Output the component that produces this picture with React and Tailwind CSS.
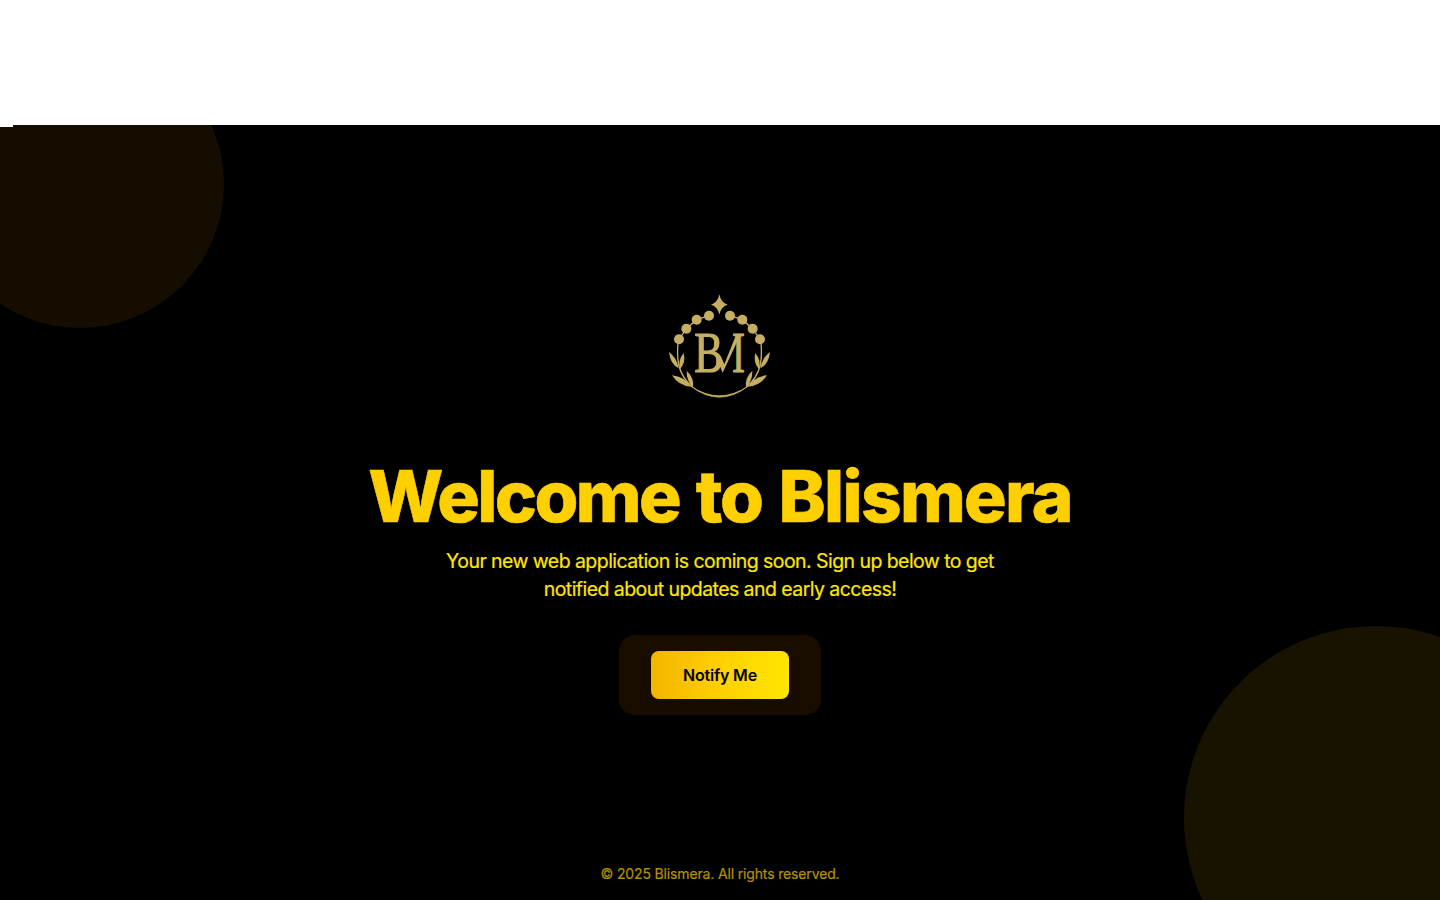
const gold = "#c6ae62";

function Sprig() {
  return (
    <g>
      <path d="M55 163 Q50 208 56 240 Q66 280 98 306" fill="none" stroke={gold} strokeWidth="4" />
      <path d="M57 163 L79 131 L110 104 L147 92" fill="none" stroke={gold} strokeWidth="4" />
      <circle cx="57" cy="163" r="15" />
      <circle cx="79" cy="131" r="15" />
      <circle cx="110" cy="104" r="15" />
      <circle cx="147" cy="92" r="15" />
      <path d="M27 201 Q51 219 56 250 Q31 238 27 201Z" />
      <path d="M71 204 Q78 233 60 252 Q53 226 71 204Z" />
      <path d="M36 271 Q74 275 93 305 Q56 303 36 271Z" />
      <path d="M80 257 Q103 279 99 307 Q79 287 80 257Z" />
    </g>
  );
}

function Logo() {
  return (
    <svg viewBox="0 0 360 360" className="size-[120px]" fill={gold} role="img" aria-label="Blismera">
      <path d="M178 28 Q183 54 203 59 Q183 64 178 89 Q173 64 153 59 Q173 54 178 28Z" />
      <Sprig />
      <g transform="translate(357 0) scale(-1 1)">
        <Sprig />
      </g>
      <path d="M92 303 Q178 370 265 303 Q178 362 92 303Z" stroke={gold} strokeWidth="2.5" />
      <g fontFamily="'Liberation Serif', serif" fontSize="172" stroke={gold} strokeWidth="3.5">
        <text transform="translate(103 262) scale(.76 1)">B</text>
        <text transform="translate(216 262) scale(.68 1)">I</text>
      </g>
      <path d="M172 224 L182 212 L193 238 L228 150 L241 150 L188 263Z" />
    </svg>
  );
}

export default function App() {
  return (
    <div className="flex h-[900px] w-full flex-col overflow-hidden bg-white font-['Inter',sans-serif]">
      <div className="h-[125px] shrink-0" />
      <main className="relative flex flex-1 flex-col items-center overflow-hidden bg-black">
        <div className="absolute -left-16 -top-[85.5px] size-72 rounded-full bg-[#150d00]" />
        <div className="absolute -right-32 top-[500.5px] size-96 rounded-full bg-[#181200]" />
        <div className="absolute left-0 top-0 h-0.5 w-[13px] bg-white" />
        <div className="relative mt-40">
          <Logo />
        </div>
        <h1 className="relative mt-[55px] text-[71px] font-extrabold leading-[72px] tracking-[-2px] text-[#ffd000] [word-spacing:3px] [-webkit-text-stroke:0.6px_#ffd000]">
          <span className="tracking-[-2.6px]">Welcome</span> to <span className="tracking-[-1.7px]">Blismera</span>
        </h1>
        <p className="relative mt-[15px] w-[576px] text-center text-[19.5px] leading-7 tracking-[-0.56px] text-[#ffe600] [-webkit-text-stroke:0.2px_#ffe600]">
          Your new web application is coming soon. Sign up below to get
          <br />
          notified about updates and early access!
        </p>
        <div className="relative mt-8 rounded-2xl bg-[#190d00] px-8 py-4">
          <button className="h-12 w-[138px] rounded-lg bg-linear-to-r from-[#f4b400] via-[#ffd000] to-[#ffe600] font-semibold tracking-[-0.2px] text-black shadow-lg">
            Notify Me
          </button>
        </div>
        <footer className="relative mt-auto mb-4 text-sm leading-5 tracking-[-0.15px] text-[#b39200] [-webkit-text-stroke:0.2px_#b39200]">
          © 2025 Blismera. All rights reserved.
        </footer>
      </main>
    </div>
  );
}
